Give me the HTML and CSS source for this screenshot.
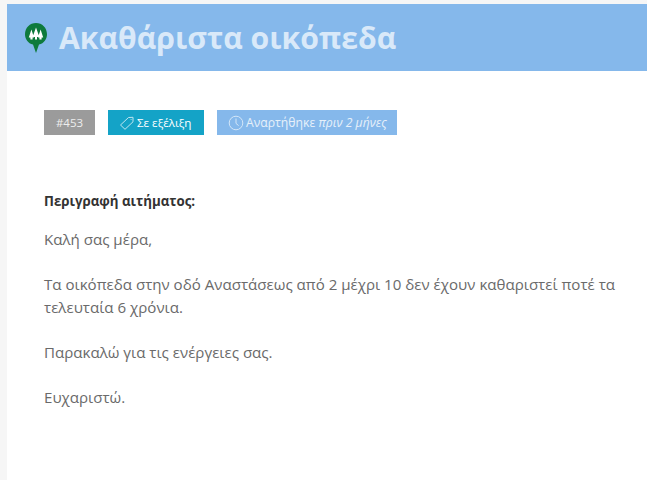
FILE: index.html
```html
<!DOCTYPE html>
<html lang="el">
<head>
<meta charset="utf-8">
<title>Ακαθάριστα οικόπεδα</title>
<link rel="stylesheet" href="styles.css">
</head>
<body>
<main class="panel">
  <header class="hero">
    <svg class="pin" width="24" height="32" viewBox="0 0 24 32" aria-hidden="true">
      <path d="M12 31 L9 22.6 C4 21.4 1 17 1 12.2 C1 5.8 5.9 1 12 1 C18.1 1 23 5.8 23 12.2 C23 17 20 21.4 15 22.6 Z" fill="#0e7a3c"/>
      <path d="M12 5.5 L15.4 15 L13 15 L13 17.5 L11 17.5 L11 15 L8.6 15 Z M7.4 7.5 L10 15.5 L8.6 15.5 L8.6 17.5 L6.4 17.5 L6.4 15.5 L4.8 15.5 Z M16.6 7.5 L19.2 15.5 L17.6 15.5 L17.6 17.5 L15.4 17.5 L15.4 15.5 L14 15.5 Z" fill="#fff"/>
    </svg>
    <h1 class="title">Ακαθάριστα οικόπεδα</h1>
  </header>
  <div class="content">
    <div class="tags">
      <span class="tag tag-id">#453</span>
      <span class="tag tag-status">
        <svg class="tag-icon" width="16" height="16" viewBox="0 0 16 16" aria-hidden="true"><path d="M1.5 10 L9.5 2.5 L14 2.3 L14 6.8 L6 14.3 Z M11.6 4 L12.4 4.8" fill="none" stroke="#bfe6f0" stroke-width="1"/></svg>
        <span>Σε εξέλιξη</span>
      </span>
      <span class="tag tag-time">
        <svg class="tag-icon" width="16" height="16" viewBox="0 0 16 16" aria-hidden="true"><circle cx="8" cy="8" r="6.8" fill="none" stroke="#d3e6f8" stroke-width="1"/><path d="M8 3.5 V8.4 L10.6 10.6" fill="none" stroke="#d3e6f8" stroke-width="1"/></svg>
        <span>Αναρτήθηκε <em>πριν 2 μήνες</em></span>
      </span>
    </div>
    <h2 class="label">Περιγραφή αιτήματος:</h2>
    <p class="body-text">Καλή σας μέρα,</p>
    <p class="body-text">Τα οικόπεδα στην οδό Αναστάσεως από 2 μέχρι 10 δεν έχουν καθαριστεί ποτέ τα τελευταία 6 χρόνια.</p>
    <p class="body-text">Παρακαλώ για τις ενέργειες σας.</p>
    <p class="body-text">Ευχαριστώ.</p>
  </div>
</main>
</body>
</html>
```

FILE: styles.css
```css
html, body {
  margin: 0;
  height: 100%;
  overflow: hidden;
}
body {
  background: #f6f6f6;
  padding: 4px 0 0 7px;
  box-sizing: border-box;
  font-family: "Open Sans", "Noto Sans", sans-serif;
}
.panel {
  background: #fff;
  height: 100%;
}
.hero {
  height: 67px;
  box-sizing: border-box;
  background: #85b8eb;
  display: flex;
  align-items: center;
  padding: 0 0 0 17px;
  gap: 11px;
}
.pin { flex: none; }
.title {
  margin: 0;
  font-size: 30.2px;
  line-height: 38px;
  font-weight: 700;
  color: #d9e9f9;
}
.content {
  padding: 39px 0 0 37px;
}
.tags {
  display: flex;
  gap: 13px;
  height: 25px;
  margin-bottom: 58px;
}
.tag {
  display: flex;
  align-items: center;
  box-sizing: border-box;
  height: 25px;
  font-size: 12.2px;
  color: #fff;
  white-space: nowrap;
}
.tag-id {
  width: 51px;
  justify-content: center;
  background: #9b9b9b;
  color: #eee;
  font-size: 11.5px;
}
.tag-status {
  width: 96px;
  padding-left: 11px;
  background: #14a3c7;
  gap: 2px;
  font-size: 11.6px;
}
.tag-time {
  width: 180px;
  padding-left: 11px;
  background: #85b8eb;
  color: #e6f0fa;
  gap: 2px;
}
.tag-icon { flex: none; }
.label {
  margin: 0 0 19px;
  font-size: 13.3px;
  line-height: 16px;
  font-weight: 700;
  color: #333;
}
.body-text {
  margin: 0 0 22.5px;
  font-size: 15.1px;
  line-height: 22.5px;
  color: #6a6a6a;
}
```
